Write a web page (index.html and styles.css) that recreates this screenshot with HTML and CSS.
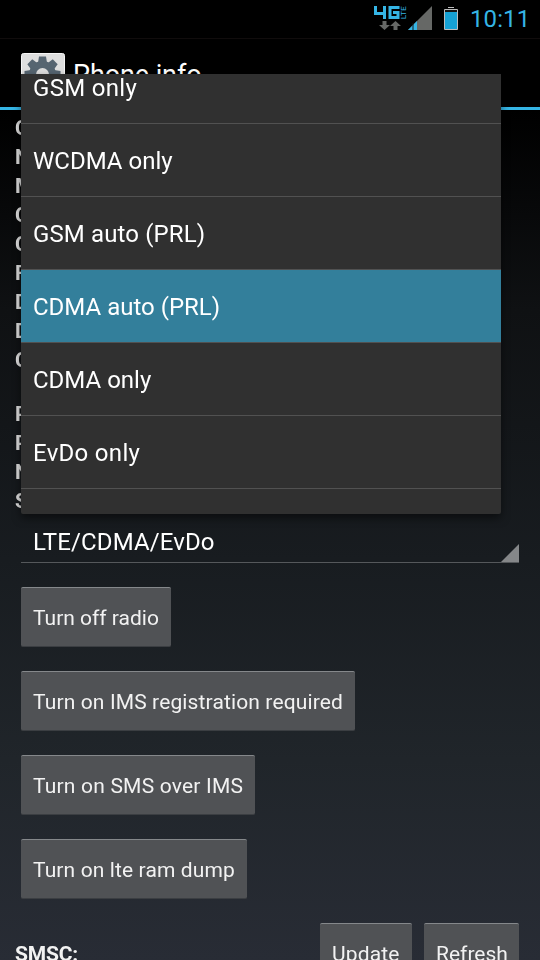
FILE: index.html
```html
<!DOCTYPE html>
<html lang="en">
<head>
<meta charset="utf-8">
<title>Phone info</title>
<link rel="stylesheet" href="styles.css">
</head>
<body>
<div class="screen">
  <header class="status">
    <svg class="status-icons" width="100" height="38" viewBox="0 0 100 38">
      <g fill="none" stroke="#35b5e5" stroke-width="3">
        <path d="M1.500 6v7.500h10M10.500 6v13M25.500 7.500h-9.500v10h8v-5h-5"/>
      </g>
      <text class="lte" transform="translate(32 19.300) rotate(-90)" textLength="13" lengthAdjust="spacingAndGlyphs">LTE</text>
      <path d="M8.500 21h4v4h3.500l-5.500 5-5.500-5h3.500zM19.500 30h4v-4h3.500l-5.500-5-5.500 5h3.500z" fill="#666866"/>
      <path d="M58 6v24H34z" fill="#666866"/>
      <path d="M43 21v9h-9z" fill="#35b5e5"/><path d="M39 23v7" stroke="#151515"/>
      <path d="M70.500 9.500h13v20h-13zM74 7.500h6" fill="#151515" stroke="#bdbdbd"/>
      <path d="M71 12h12v17H71z" fill="#16a1d4"/>
    </svg>
    <span class="clock">10:11</span>
  </header>
  <div class="titlebar">
    <svg class="app-icon" width="44" height="44" viewBox="0 0 44 44">
      <rect x=".5" y=".5" width="43" height="43" rx="2" fill="#dedede" stroke="#f5f5f5"/>
      <g fill="#566571"><circle cx="21.500" cy="21.500" r="13.500"/>
        <path id="tooth" d="M17 10l1-6.500h7l1 6.500z"/>
        <use href="#tooth" transform="rotate(45 21.500 21.500)"/><use href="#tooth" transform="rotate(90 21.500 21.500)"/>
        <use href="#tooth" transform="rotate(-45 21.500 21.500)"/><use href="#tooth" transform="rotate(-90 21.500 21.500)"/>
        <use href="#tooth" transform="rotate(135 21.500 21.500)"/><use href="#tooth" transform="rotate(180 21.500 21.500)"/><use href="#tooth" transform="rotate(225 21.500 21.500)"/>
      </g>
      <circle cx="21.500" cy="21.500" r="6.500" fill="#dedede"/>
    </svg>
    <h1 class="title">Phone info</h1>
  </div>
  <main class="content">
    <div class="labels"><b>C</b><b>N</b><b>M</b><b>C</b><b>C</b><b>F</b><b>D</b><b>D</b><b>C</b></div>
    <div class="labels second"><b>P</b><b>P</b><b>N</b><b>S</b></div>
    <div class="spinner"><span>LTE/CDMA/EvDo</span><svg class="corner" width="18" height="18"><path d="M18 0v18H0z" fill="#858789"/></svg></div>
    <div class="actions">
      <button class="btn w1">Turn off radio</button>
      <button class="btn w2">Turn on IMS registration required</button>
      <button class="btn w3">Turn on SMS over IMS</button>
      <button class="btn w4">Turn on lte ram dump</button>
    </div>
    <div class="smsc"><b class="smsc-label">SMSC:</b><button class="btn w5">Update</button><button class="btn w6">Refresh</button></div>
  </main>
  <ul class="popup">
    <li class="loose">GSM only</li><li>WCDMA only</li><li class="prl">GSM auto (PRL)</li><li class="selected">CDMA auto (PRL)</li><li>CDMA only</li><li class="loose">EvDo only</li>
  </ul>
</div>
</body>
</html>
```
FILE: styles.css
```css
* { box-sizing: border-box; }
body { margin: 0; background: #000; }
.screen {
  position: relative; width: 540px; height: 960px; overflow: hidden;
  display: flex; flex-direction: column;
  font-family: Roboto, sans-serif; color: #fff;
  background: linear-gradient(#000 0, #000 110px, #0f1113 310px, #181c20 560px, #20252a 760px, #282c35 960px);
}
.status { flex: none; height: 39px; display: flex; padding-left: 374px; background: #000; border-bottom: 1px solid #100c0c; }
.status-icons { flex: none; }
.lte { font: 7.5px Roboto, sans-serif; fill: #35b5e5; }
.clock { margin-left: -4px; font-size: 24px; line-height: 39px; color: #35b5e5; letter-spacing: .1px; white-space: nowrap; }
.titlebar { flex: none; height: 71px; display: flex; padding: 14px 0 0 21px; border-bottom: 3px solid #35b5e5; }
.app-icon { flex: none; }
.title { margin: 5px 0 0 8px; font-size: 27px; line-height: 34px; font-weight: 400; letter-spacing: -.1px; }
.content { flex: none; display: flex; flex-direction: column; will-change: transform; }
.labels { display: flex; flex-direction: column; padding: 4px 0 0 15px; color: #dedede; font-size: 21px; line-height: 29px; }
.second { margin-top: 21px; }
.spinner { display: flex; justify-content: space-between; align-items: flex-end; height: 48px; margin: -1px 21px 0; border-bottom: 1px solid #55585b; font-size: 24px; line-height: 40px; letter-spacing: .12px; padding-left: 12px; }
.actions { display: flex; flex-direction: column; align-items: flex-start; gap: 24px; padding: 24px 0 0 21px; }
.btn { height: 60px; padding: 2px 0 0 12px; text-align: left; white-space: nowrap; border: 0; border-top: 1px solid #85888b; border-bottom: 1px solid #3b3e42; border-radius: 2px; background: #505255; color: #f2f2f2; font: 21px Roboto, sans-serif; }
.w1 { width: 150px; }
.w2 { width: 334px; letter-spacing: .13px; }
.w3 { width: 234px; letter-spacing: .2px; }
.w4 { width: 226px; letter-spacing: .12px; }
.w5 { width: 92px; margin-right: 12px; letter-spacing: .15px; }
.w6 { width: 95px; }
.smsc { display: flex; margin-top: 24px; padding-left: 15px; }
.smsc-label { width: 305px; line-height: 62px; font-size: 21px; color: #f2f2f2; letter-spacing: -.2px; }
.popup {
  position: absolute; left: 21px; top: 74px; width: 480px; height: 440px; overflow: hidden;
  margin: 0; padding: 0; list-style: none; background: #303030; border-radius: 0 0 2px 2px;
  box-shadow: 0 4px 9px rgba(0, 0, 0, .5);
}
.popup li { height: 73px; padding-left: 12px; border-bottom: 1px solid #515151; font-size: 24px; line-height: 75px; }
.popup li:first-child { margin-top: -23px; }
.popup .loose { letter-spacing: .3px; }
.popup .prl { letter-spacing: .12px; }
.popup .selected { background: #337f9b; }
```
